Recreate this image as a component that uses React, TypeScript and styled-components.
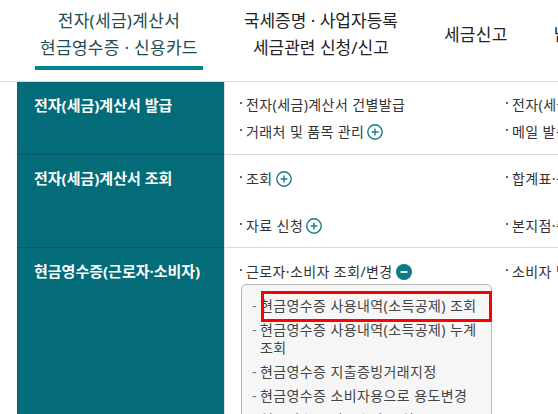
import React from "react";
import styled, { createGlobalStyle } from "styled-components";

const FONT = `"Noto Sans", "Noto Sans CJK KR", sans-serif`;

const Global = createGlobalStyle`
  html, body { margin: 0; padding: 0; background: #fff; }
  body { font-family: ${FONT}; }
`;

const Page = styled.div`
  width: 558px;
  height: 414px;
  overflow: hidden;
  font-family: ${FONT};
  background: #fff;
`;

const Header = styled.nav`
  display: flex;
  height: 81px;
  padding-left: 17px;
  border-bottom: 1px solid #dcdcdc;
  white-space: nowrap;
`;

const Tab = styled.div`
  flex: none;
  padding: 7px 18px 0;
`;

const TabLabel = styled.div<{ $active?: boolean; $tight?: boolean }>`
  height: 54px;
  padding: 0 5px;
  display: flex;
  flex-direction: column;
  align-items: center;
  justify-content: center;
  font-size: 17px;
  letter-spacing: ${(p) => (p.$tight ? "0" : "0.3px")};
  line-height: 27px;
  color: ${(p) => (p.$active ? "#1e4c54" : "#222")};
  text-align: center;
`;

const Underline = styled.div`
  margin-top: 5px;
  height: 4px;
  background: #00848f;
`;

const Row = styled.div`
  display: flex;
`;

const Side = styled.div`
  flex: none;
  width: 207px;
  margin-left: 17px;
  box-sizing: border-box;
  padding: 13px 17px;
  background: #036c78;
  border-bottom: 1px solid #0a5660;
  color: #fff;
  font-size: 15px;
  font-weight: bold;
  line-height: 20px;
  white-space: nowrap;
`;

const Main = styled.div<{ $pt: number; $pb: number }>`
  flex: 1;
  min-width: 0;
  border-left: 1px solid #dedede;
  border-bottom: 1px solid #dcdcdc;
  padding: ${(p) => p.$pt}px 0 ${(p) => p.$pb}px 15px;
`;

const Items = styled.div<{ $gap: number }>`
  display: grid;
  grid-template-columns: 266px 266px;
  align-items: start;
  row-gap: ${(p) => p.$gap}px;
`;

const Item = styled.div`
  position: relative;
  display: flex;
  align-items: center;
  gap: 3px;
  padding-left: 6px;
  font-size: 14px;
  letter-spacing: 0.4px;
  line-height: 18px;
  color: #333;
  white-space: nowrap;
  &::before {
    content: "";
    position: absolute;
    left: 0;
    top: 6px;
    width: 2px;
    height: 2px;
    background: #666;
  }
`;

const IconWrap = styled.span`
  display: inline-flex;
  width: 16px;
  height: 16px;
  flex: none;
`;

const SubMenu = styled.div`
  position: relative;
  width: 251px;
  box-sizing: border-box;
  margin: 3px 0 0 1px;
  padding: 12px 7px 20px 10px;
  border: 1px solid #b8b8b8;
  border-radius: 5px;
  background: #f6f6f6;
  display: flex;
  flex-direction: column;
  gap: 6px;
`;

const SubItem = styled.div`
  display: flex;
  font-size: 14px;
  letter-spacing: 0.4px;
  line-height: 18px;
  color: #444;
`;

const Dash = styled.span`
  flex: none;
  width: 8px;
  color: #777;
`;

const Highlight = styled.div`
  position: absolute;
  left: 19px;
  top: 6px;
  width: 231px;
  height: 31px;
  box-sizing: border-box;
  border: 3px solid #f00;
  pointer-events: none;
`;

const Plus = () => (
  <IconWrap>
    <svg width="16" height="16" viewBox="0 0 16 16">
      <circle cx="8" cy="8" r="7.2" fill="#fff" stroke="#1a7b86" strokeWidth="1.4" />
      <path d="M8 4.6v6.8M4.6 8h6.8" stroke="#1a7b86" strokeWidth="1.4" />
    </svg>
  </IconWrap>
);

const Minus = () => (
  <IconWrap>
    <svg width="16" height="16" viewBox="0 0 16 16">
      <circle cx="8" cy="8" r="8" fill="#0b7b86" />
      <path d="M4.5 8h7" stroke="#fff" strokeWidth="1.8" />
    </svg>
  </IconWrap>
);

export default function App() {
  return (
    <Page>
      <Global />
      <Header>
        <Tab>
          <TabLabel $active>
            <span>전자(세금)계산서</span>
            <span>현금영수증 · 신용카드</span>
          </TabLabel>
          <Underline />
        </Tab>
        <Tab>
          <TabLabel $tight>
            <span>국세증명 · 사업자등록</span>
            <span>세금관련 신청/신고</span>
          </TabLabel>
        </Tab>
        <Tab>
          <TabLabel>
            <span>세금신고</span>
          </TabLabel>
        </Tab>
        <Tab>
          <TabLabel>
            <span>납부 · 고지 · 환급</span>
          </TabLabel>
        </Tab>
      </Header>

      <Row>
        <Side>전자(세금)계산서 발급</Side>
        <Main $pt={14} $pb={13}>
          <Items $gap={9}>
            <Item>전자(세금)계산서 건별발급</Item>
            <Item>전자(세금)계산서 일괄발급</Item>
            <Item>
              거래처 및 품목 관리 <Plus />
            </Item>
            <Item>메일 발송내역 조회</Item>
          </Items>
        </Main>
      </Row>

      <Row>
        <Side>전자(세금)계산서 조회</Side>
        <Main $pt={15} $pb={12}>
          <Items $gap={29}>
            <Item>
              조회 <Plus />
            </Item>
            <Item>합계표·통계 조회</Item>
            <Item>
              자료 신청 <Plus />
            </Item>
            <Item>본지점·총괄 조회</Item>
          </Items>
        </Main>
      </Row>

      <Row>
        <Side>현금영수증(근로자·소비자)</Side>
        <Main $pt={15} $pb={12}>
          <Items $gap={9}>
            <div>
              <Item>
                근로자·소비자 조회/변경 <Minus />
              </Item>
              <SubMenu>
                <SubItem>
                  <Dash>-</Dash>
                  <span>현금영수증 사용내역(소득공제) 조회</span>
                </SubItem>
                <SubItem>
                  <Dash>-</Dash>
                  <span>현금영수증 사용내역(소득공제) 누계 조회</span>
                </SubItem>
                <SubItem>
                  <Dash>-</Dash>
                  <span>현금영수증 지출증빙거래지정</span>
                </SubItem>
                <SubItem>
                  <Dash>-</Dash>
                  <span>현금영수증 소비자용으로 용도변경</span>
                </SubItem>
                <SubItem>
                  <Dash>-</Dash>
                  <span>현금영수증 발급수단 조회</span>
                </SubItem>
                <Highlight />
              </SubMenu>
            </div>
            <Item>소비자 발급수단 관리</Item>
          </Items>
        </Main>
      </Row>
    </Page>
  );
}
